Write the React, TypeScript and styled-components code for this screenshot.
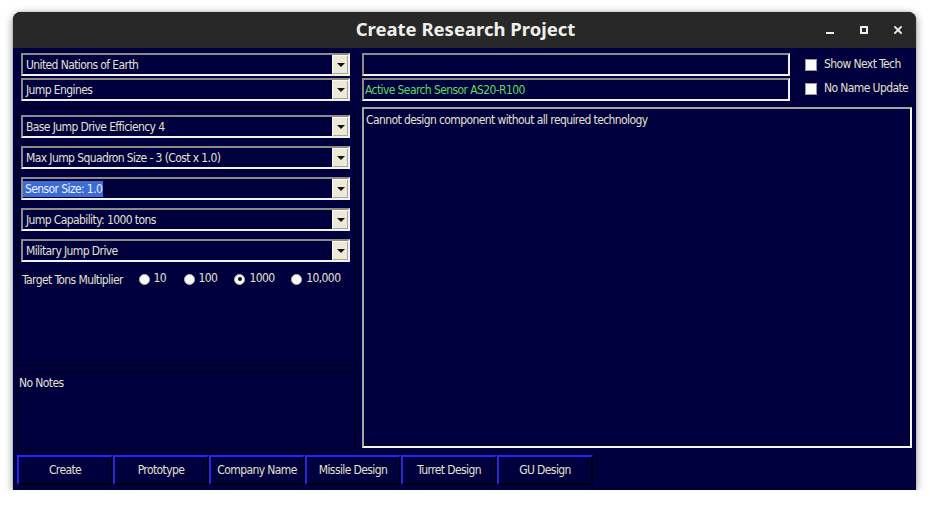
import React from "react";
import styled, { createGlobalStyle } from "styled-components";

const GlobalStyle = createGlobalStyle`
  html, body {
    margin: 0;
    padding: 0;
    background: #ffffff;
  }
`;

const uiFont = `"Liberation Sans Narrow", "DejaVu Sans Condensed", "Liberation Sans", sans-serif`;
const navy = "#00003f";
const ink = "#e4e0cc";

const Window = styled.div`
  margin: 12px 0 0 13px;
  width: 903px;
  height: 478px;
  border-radius: 8px 8px 0 0;
  background: ${navy};
  box-shadow: 0 2px 8px rgba(0, 0, 0, 0.45), 0 0 1px rgba(0, 0, 0, 0.6);
  display: flex;
  flex-direction: column;
  overflow: hidden;
  font-family: ${uiFont};
  font-size: 12px;
  letter-spacing: -0.6px;
  color: ${ink};
`;

const TitleBar = styled.div`
  height: 36px;
  flex: none;
  background: #282828;
  display: flex;
  align-items: center;
  justify-content: center;
  position: relative;
`;

const Title = styled.div`
  font-family: "Noto Sans", "DejaVu Sans", sans-serif;
  font-weight: 700;
  font-size: 18.5px;
  letter-spacing: 0;
  color: #efefec;
  margin: 0 0 3px 2px;
`;

const Controls = styled.div`
  position: absolute;
  right: 14px;
  top: 0;
  height: 36px;
  display: flex;
  align-items: center;
  gap: 26px;
`;

const ControlIcon = styled.svg`
  width: 8px;
  height: 8px;
  display: block;
`;

const Content = styled.div`
  flex: 1;
  display: flex;
  flex-direction: column;
  padding: 5px 0 0 4px;
`;

const Columns = styled.div`
  display: grid;
  grid-template-columns: 338px 550px;
  column-gap: 7px;
`;

const LeftColumn = styled.div`
  display: flex;
  flex-direction: column;
`;

const RightColumn = styled.div`
  display: flex;
  flex-direction: column;
`;

const TopCombos = styled.div`
  display: flex;
  flex-direction: column;
  gap: 2px;
  padding: 0 5px 0 4px;
`;

const Combo = styled.div`
  height: 23px;
  box-sizing: border-box;
  border-top: 2px solid #8c8c84;
  border-left: 2px solid #8c8c84;
  border-bottom: 2px solid #f2f2ea;
  border-right: 2px solid #f2f2ea;
  display: flex;
  align-items: stretch;
  background: ${navy};
`;

const ComboText = styled.div<{ $selected?: boolean }>`
  flex: 1;
  display: flex;
  align-items: center;
  padding-left: ${(p) => (p.$selected ? "0" : "1px")};
  white-space: nowrap;
  overflow: hidden;

  span {
    padding: 1px 1px 1px 2px;
    background: ${(p) => (p.$selected ? "#3b6cd2" : "transparent")};
    color: ${(p) => (p.$selected ? "#eef0ff" : ink)};
  }
`;

const ComboButton = styled.div`
  width: 15px;
  background: #ece9d8;
  border-left: 1px solid #fbfbf5;
  border-top: 1px solid #fbfbf5;
  box-shadow: inset -1px -1px 0 #a8a699;
  display: flex;
  align-items: center;
  justify-content: center;
`;

const Arrow = styled.div`
  width: 0;
  height: 0;
  border-left: 4px solid transparent;
  border-right: 4px solid transparent;
  border-top: 4px solid #111;
`;

const GroupBox = styled.div`
  margin-top: 6px;
  height: 259px;
  box-sizing: border-box;
  border: 1px solid #000010;
  padding: 7px 4px 0 3px;
  display: flex;
  flex-direction: column;
  gap: 8px;
`;

const RadioRow = styled.div`
  display: flex;
  align-items: center;
  height: 20px;
  margin-top: -1px;
  padding-left: 1px;
`;

const RadioLabel = styled.div`
  width: 119px;
  white-space: nowrap;
  padding-top: 2px;
`;

const RadioOption = styled.div<{ $width: number }>`
  width: ${(p) => p.$width}px;
  display: flex;
  align-items: center;
  gap: 4px;
  white-space: nowrap;

  span {
    margin-top: -3px;
  }
`;

const RadioDot = styled.div<{ $checked?: boolean }>`
  width: 11px;
  height: 11px;
  box-sizing: border-box;
  border-radius: 50%;
  background: #fbfbfb;
  border: 1px solid #b9b9b9;
  display: flex;
  align-items: center;
  justify-content: center;

  &::after {
    content: "";
    width: 4px;
    height: 4px;
    border-radius: 50%;
    background: ${(p) => (p.$checked ? "#111" : "transparent")};
  }
`;

const NotesBox = styled.div`
  margin-top: 6px;
  height: 78px;
  box-sizing: border-box;
  border: 1px solid #000010;
  padding: 3px 1px;
`;

const TopFields = styled.div`
  display: flex;
  gap: 15px;
`;

const FieldStack = styled.div`
  width: 428px;
  flex: none;
  display: flex;
  flex-direction: column;
  gap: 2px;
`;

const TextField = styled.div<{ $color?: string }>`
  height: 23px;
  box-sizing: border-box;
  border-top: 2px solid #8c8c84;
  border-left: 2px solid #8c8c84;
  border-bottom: 2px solid #f2f2ea;
  border-right: 2px solid #f2f2ea;
  display: flex;
  align-items: center;
  padding-left: 1px;
  color: ${(p) => p.$color || ink};
`;

const CheckStack = styled.div`
  display: flex;
  flex-direction: column;
  gap: 12px;
  padding-top: 6px;
`;

const CheckRow = styled.div`
  display: flex;
  align-items: center;
  gap: 7px;
  height: 12px;
  white-space: nowrap;

  span {
    margin-top: -2px;
  }
`;

const CheckBox = styled.div`
  width: 12px;
  height: 12px;
  box-sizing: border-box;
  background: #fcfcfc;
  border: 1px solid #9a9a9a;
`;

const DescriptionBox = styled.div`
  margin-top: 6px;
  height: 341px;
  box-sizing: border-box;
  border-top: 2px solid #a6a6a0;
  border-left: 2px solid #a6a6a0;
  border-bottom: 2px solid #f6f6f2;
  border-right: 2px solid #f6f6f2;
  padding: 4px 2px;
`;

const ButtonBar = styled.div`
  display: flex;
  margin-top: 5px;
`;

const TabButton = styled.div`
  width: 96px;
  height: 30px;
  box-sizing: border-box;
  border-top: 2px solid #2626f0;
  border-left: 2px solid #2626f0;
  border-bottom: 2px solid #000008;
  border-right: 2px solid #000008;
  display: flex;
  align-items: center;
  justify-content: center;
  white-space: nowrap;
`;

const comboRows = [
  "Base Jump Drive Efficiency 4",
  "Max Jump Squadron Size - 3 (Cost x 1.0)",
  "Sensor Size: 1.0",
  "Jump Capability: 1000 tons",
  "Military Jump Drive",
];

const radioOptions = [
  { label: "10", width: 46 },
  { label: "100", width: 52 },
  { label: "1000", width: 58, checked: true },
  { label: "10,000", width: 60 },
];

const buttons = [
  "Create",
  "Prototype",
  "Company Name",
  "Missile Design",
  "Turret Design",
  "GU Design",
];

const ComboBox: React.FC<{ text: string; selected?: boolean }> = ({
  text,
  selected,
}) => (
  <Combo>
    <ComboText $selected={selected}>
      <span>{text}</span>
    </ComboText>
    <ComboButton>
      <Arrow />
    </ComboButton>
  </Combo>
);

const App: React.FC = () => {
  return (
    <>
      <GlobalStyle />
      <Window>
        <TitleBar>
          <Title>Create Research Project</Title>
          <Controls>
            <ControlIcon viewBox="0 0 8 8">
              <rect x="0" y="6" width="8" height="2" fill="#f0f0f0" />
            </ControlIcon>
            <ControlIcon viewBox="0 0 8 8">
              <rect
                x="1"
                y="1"
                width="6"
                height="6"
                fill="none"
                stroke="#f0f0f0"
                strokeWidth="2"
              />
            </ControlIcon>
            <ControlIcon viewBox="0 0 8 8">
              <path
                d="M1 1 L7 7 M7 1 L1 7"
                stroke="#f0f0f0"
                strokeWidth="1.8"
                strokeLinecap="square"
              />
            </ControlIcon>
          </Controls>
        </TitleBar>

        <Content>
          <Columns>
            <LeftColumn>
              <TopCombos>
                <ComboBox text="United Nations of Earth" />
                <ComboBox text="Jump Engines" />
              </TopCombos>

              <GroupBox>
                {comboRows.map((row) => (
                  <ComboBox
                    key={row}
                    text={row}
                    selected={row === "Sensor Size: 1.0"}
                  />
                ))}
                <RadioRow>
                  <RadioLabel>Target Tons Multiplier</RadioLabel>
                  {radioOptions.map((opt) => (
                    <RadioOption key={opt.label} $width={opt.width}>
                      <RadioDot $checked={opt.checked} />
                      <span>{opt.label}</span>
                    </RadioOption>
                  ))}
                </RadioRow>
              </GroupBox>

              <NotesBox>No Notes</NotesBox>
            </LeftColumn>

            <RightColumn>
              <TopFields>
                <FieldStack>
                  <TextField />
                  <TextField $color="#5cdc5c">
                    Active Search Sensor AS20-R100
                  </TextField>
                </FieldStack>
                <CheckStack>
                  <CheckRow>
                    <CheckBox />
                    <span>Show Next Tech</span>
                  </CheckRow>
                  <CheckRow>
                    <CheckBox />
                    <span>No Name Update</span>
                  </CheckRow>
                </CheckStack>
              </TopFields>

              <DescriptionBox>
                Cannot design component without all required technology
              </DescriptionBox>
            </RightColumn>
          </Columns>

          <ButtonBar>
            {buttons.map((b) => (
              <TabButton key={b}>{b}</TabButton>
            ))}
          </ButtonBar>
        </Content>
      </Window>
    </>
  );
};

export default App;
